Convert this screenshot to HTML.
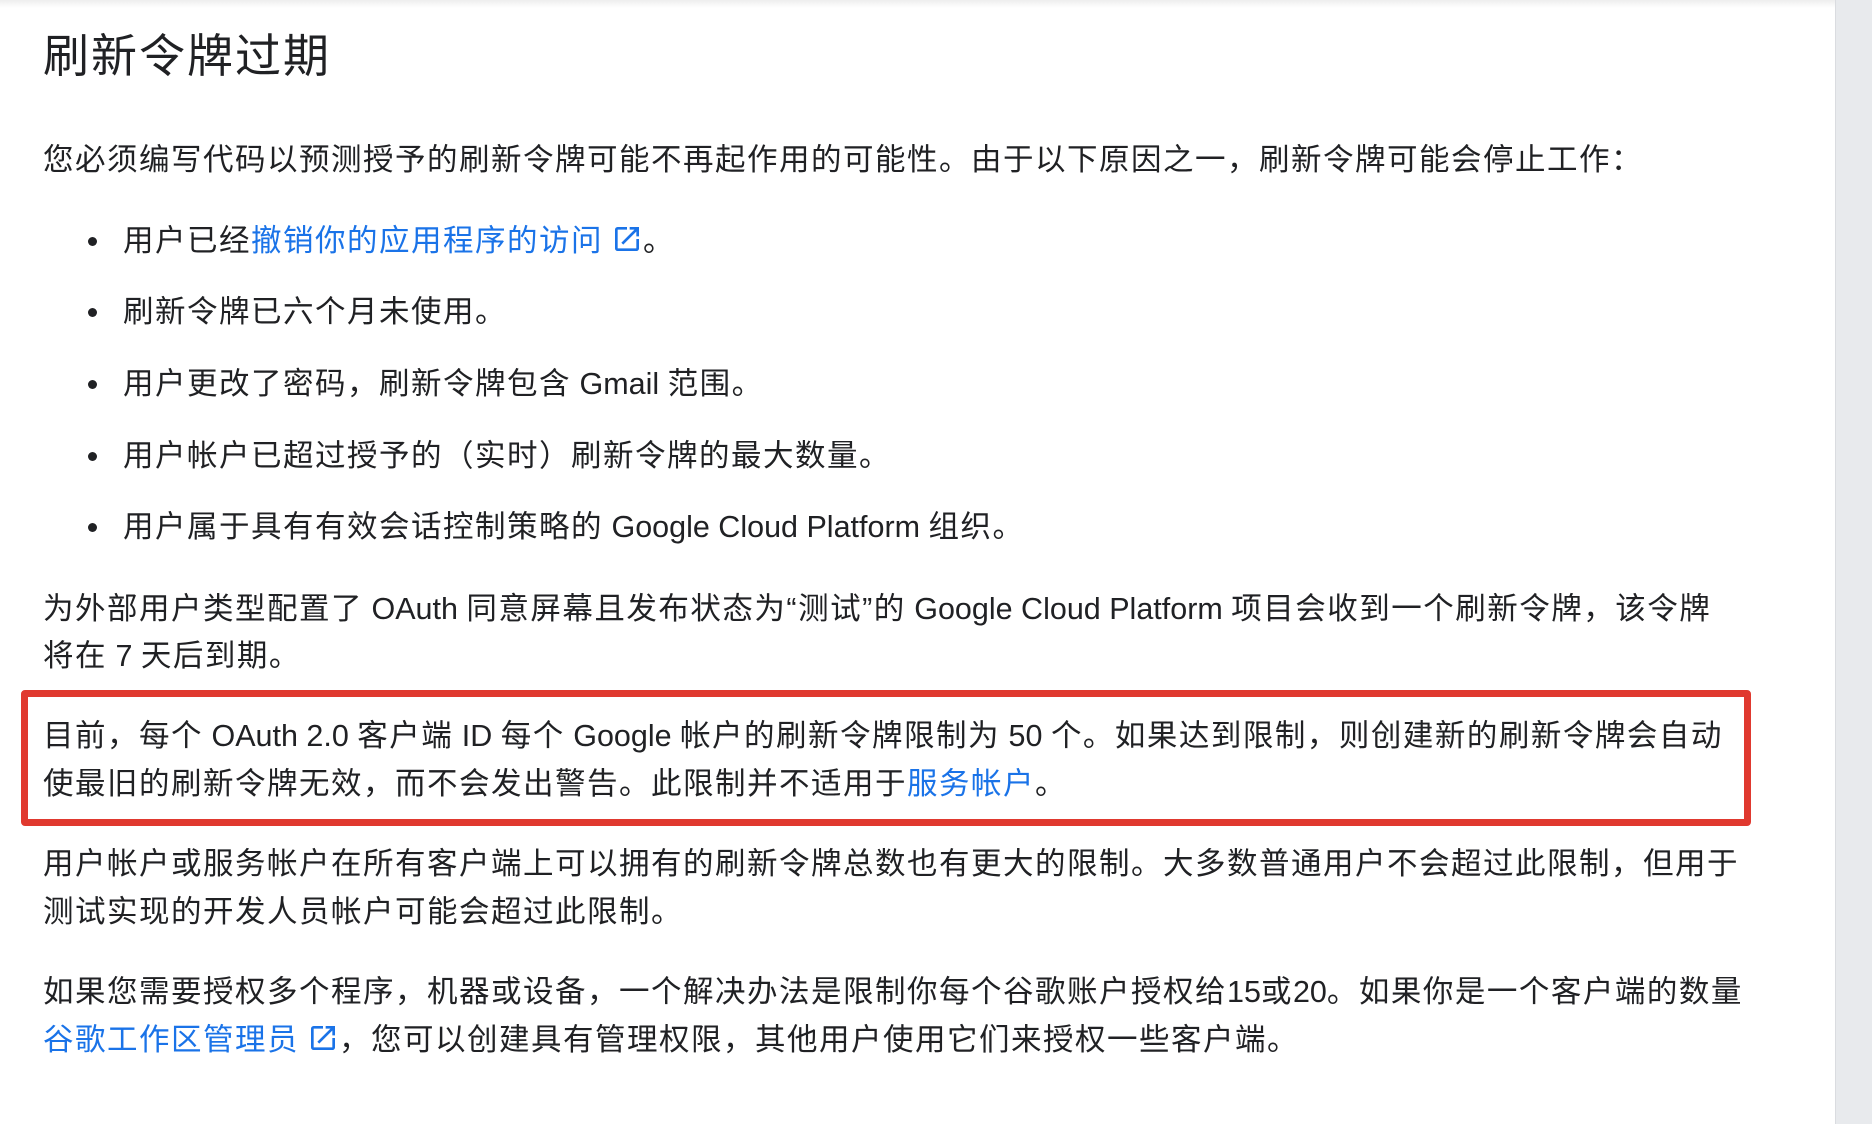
<!DOCTYPE html>
<html><head><meta charset="utf-8"><style>
html,body{margin:0;padding:0;}
body{width:1872px;height:1124px;position:relative;overflow:hidden;background:#fff;
font-family:"Liberation Sans","Noto Sans CJK SC",sans-serif;color:#202124;}
.l{position:absolute;left:43px;height:48px;line-height:48px;font-size:30.5px;white-space:nowrap;letter-spacing:1.5px;}
.e{letter-spacing:0;}
.b{left:123px;}
.dot{position:absolute;left:88px;width:9px;height:9px;border-radius:50%;background:#202124;}
a{color:#1a73e8;text-decoration:none;}
.ext{display:inline-block;vertical-align:-4px;margin-left:8px;}
#side{position:absolute;left:1835px;top:0;width:37px;height:1124px;background:#e8eaed;border-left:1px solid #dadce0;}
#top{position:absolute;left:0;top:0;width:1835px;height:8px;background:linear-gradient(#eee,#fff);}
#box{position:absolute;left:21px;top:690px;width:1716px;height:122px;border:7px solid #e0392f;border-radius:4px;}
</style></head><body>
<div id="top"></div>
<div id="side"></div>
<div class="l" style="top:28px;height:56px;line-height:56px;font-size:46px;letter-spacing:2px;">刷新令牌过期</div>
<div class="l" style="top:136px;">您必须编写代码以预测授予的刷新令牌可能不再起作用的可能性。由于以下原因之一，刷新令牌可能会停止工作：</div>

<div class="dot" style="top:237px"></div>
<div class="l b" style="top:217px;">用户已经<a>撤销你的应用程序的访问<svg class="ext" width="32" height="32" viewBox="0 0 24 24"><path d="M19 19H5V5h7V3H5a2 2 0 0 0-2 2v14a2 2 0 0 0 2 2h14c1.1 0 2-.9 2-2v-7h-2v7zM14 3v2h3.59l-9.83 9.83 1.41 1.41L19 6.41V10h2V3h-7z" fill="#1a73e8"/></svg></a>。</div>
<div class="dot" style="top:308px"></div>
<div class="l b" style="top:288px;">刷新令牌已六个月未使用。</div>
<div class="dot" style="top:380px"></div>
<div class="l b" style="top:360px;">用户更改了密码，刷新令牌包含<span class="e"> Gmail </span>范围。</div>
<div class="dot" style="top:452px"></div>
<div class="l b" style="top:432px;">用户帐户已超过授予的（实时）刷新令牌的最大数量。</div>
<div class="dot" style="top:523px"></div>
<div class="l b" style="top:503px;">用户属于具有有效会话控制策略的<span class="e"> Google Cloud Platform </span>组织。</div>

<div class="l" style="top:585px;">为外部用户类型配置了<span class="e"> OAuth </span>同意屏幕且发布状态为“测试”的<span class="e"> Google Cloud Platform </span>项目会收到一个刷新令牌，该令牌</div>
<div class="l" style="top:632px;">将在<span class="e"> 7 </span>天后到期。</div>

<div id="box"></div>
<div class="l" style="top:712px;">目前，每个<span class="e"> OAuth 2.0 </span>客户端<span class="e"> ID </span>每个<span class="e"> Google </span>帐户的刷新令牌限制为<span class="e"> 50 </span>个。如果达到限制，则创建新的刷新令牌会自动</div>
<div class="l" style="top:760px;">使最旧的刷新令牌无效，而不会发出警告。此限制并不适用于<a>服务帐户</a>。</div>

<div class="l" style="top:840px;">用户帐户或服务帐户在所有客户端上可以拥有的刷新令牌总数也有更大的限制。大多数普通用户不会超过此限制，但用于</div>
<div class="l" style="top:888px;">测试实现的开发人员帐户可能会超过此限制。</div>

<div class="l" style="top:968px;">如果您需要授权多个程序，机器或设备，一个解决办法是限制你每个谷歌账户授权给<span class="e">15</span>或<span class="e">20</span>。如果你是一个客户端的数量</div>
<div class="l" style="top:1016px;"><a>谷歌工作区管理员<svg class="ext" width="32" height="32" viewBox="0 0 24 24"><path d="M19 19H5V5h7V3H5a2 2 0 0 0-2 2v14a2 2 0 0 0 2 2h14c1.1 0 2-.9 2-2v-7h-2v7zM14 3v2h3.59l-9.83 9.83 1.41 1.41L19 6.41V10h2V3h-7z" fill="#1a73e8"/></svg></a>，您可以创建具有管理权限，其他用户使用它们来授权一些客户端。</div>
</body></html>
